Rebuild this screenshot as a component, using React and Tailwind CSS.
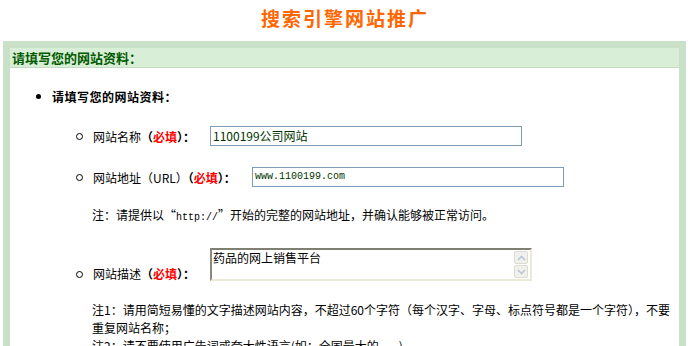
const cjk = { fontFamily: '"Noto Sans CJK SC", "Noto Sans", sans-serif' };
const mono = { fontFamily: '"Liberation Mono", "Noto Sans CJK SC", monospace' };

function Required() {
  return (
    <>
      <b className="font-bold">（</b>
      <b className="font-bold text-[#ff0000]">必填</b>
      <b className="font-bold">）：</b>
    </>
  );
}

function Circle() {
  return <span className="mr-[10px] ml-[66px] inline-block h-[7px] w-[7px] shrink-0 rounded-full border border-black" />;
}

function Chevron({ up }) {
  return (
    <svg width="9" height="6" viewBox="0 0 9 6">
      <path
        d={up ? "M1 5 L4.5 1.5 L8 5" : "M1 1 L4.5 4.5 L8 1"}
        fill="none"
        stroke="#b8c4d8"
        strokeWidth="1.6"
      />
    </svg>
  );
}

export default function App() {
  return (
    <div className="h-[346px] w-[688px] overflow-hidden bg-white text-[12px] text-black" style={cjk}>
      {/* 标题 */}
      <div className="flex h-[41px] justify-center pt-[8px]">
        <h1 className="pl-[2px] text-[19px] font-bold leading-[20px] tracking-[2px] text-[#ff6600]">
          搜索引擎网站推广
        </h1>
      </div>

      {/* 绿色面板 */}
      <div className="ml-[3px] mr-[2px] border-[7px] border-b-0 border-[#c9e0c9]">
        <div className="h-[20px] border-b border-[#c4dcc2] bg-[#d9eed6] pl-[2px] text-[13px] font-bold leading-[19px] text-[#005a00]">
          请填写您的网站资料：
        </div>

        <div className="bg-white pt-[19px] pb-[20px]">
          <div className="flex h-[19px] items-center">
            <span className="ml-[26px] mr-[11px] inline-block h-[5px] w-[5px] rounded-full bg-black" />
            <span className="text-[12px] font-bold leading-[19px] tracking-[0.5px]">请填写您的网站资料：</span>
          </div>

          {/* 网站名称 */}
          <div className="mt-[20px] flex h-[20px] items-center">
            <Circle />
            <span className="w-[117px] leading-[19px]">
              网站名称<Required />
            </span>
            <div className="h-[20px] w-[312px] border border-[#7f9db9] pl-[2px] leading-[18px] text-[#003300]">
              1100199公司网站
            </div>
          </div>

          {/* 网站地址 */}
          <div className="mt-[21px] flex h-[20px] items-center">
            <Circle />
            <span className="w-[159px] leading-[19px]">
              网站地址（URL）<Required />
            </span>
            <div
              className="h-[20px] w-[312px] border border-[#7f9db9] pl-[2px] text-[10px] leading-[18px] text-[#003300]"
              style={mono}
            >
              www.1100199.com
            </div>
          </div>

          <p className="ml-[82px] mt-[18px] leading-[19px]">
            注：请提供以“<span className="text-[10px]" style={mono}>http://</span>”开始的完整的网站地址，并确认能够被正常访问。
          </p>

          {/* 网站描述 */}
          <div className="mt-[21px] flex items-end">
            <div className="flex items-center">
              <Circle />
              <span className="w-[117px] leading-[14px]">
                网站描述<Required />
              </span>
            </div>
            <div className="flex h-[33px] w-[322px] border-2 border-t-[#7f7f72] border-l-[#8a8a7c] border-r-[#ece9d8] border-b-[#ece9d8]">
              <div className="flex-1 pl-[1px] pt-[1px] leading-[14px]">药品的网上销售平台</div>
              <div className="mr-[2px] mt-[1px] flex w-[14px] flex-col gap-[1px]">
                <div className="flex h-[13px] items-center justify-center rounded-[2px] border border-[#dcdcd4] bg-[#f1f1ec]">
                  <Chevron up />
                </div>
                <div className="flex h-[13px] items-center justify-center rounded-[2px] border border-[#dcdcd4] bg-[#f1f1ec]">
                  <Chevron />
                </div>
              </div>
            </div>
          </div>

          <div className="ml-[82px] mt-[20px] leading-[18px]">
            <p>
              注1：请用简短易懂的文字描述网站内容，不超过60个字符（每个汉字、字母、标点符号都是一个字符），不要
              <br />
              重复网站名称；
            </p>
            <p>注2：请不要使用广告词或夸大性语言(如：全国最大的......)</p>
          </div>
        </div>
      </div>
    </div>
  );
}
